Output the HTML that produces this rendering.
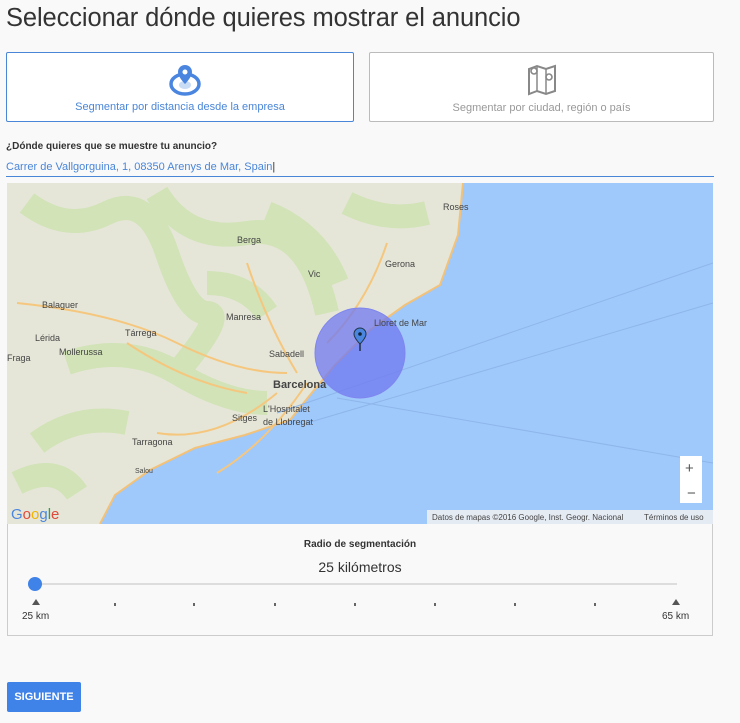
<!DOCTYPE html>
<html><head><meta charset="utf-8"><style>
body{margin:0;background:#f9f9f9;font-family:"Liberation Sans",sans-serif;width:740px;height:723px;position:relative;overflow:hidden}
.a{position:absolute}
h1{position:absolute;left:6px;top:4px;margin:0;font-weight:normal;font-size:25.5px;color:#333;letter-spacing:-0.1px}
.card{position:absolute;top:52px;height:70px;background:#fff;border:1px solid #bbb;border-radius:2px;box-sizing:border-box;text-align:center;font-size:11px}
.lbl{font-size:9px;fill:#444;font-family:"Liberation Sans",sans-serif}
</style></head><body>
<h1>Seleccionar dónde quieres mostrar el anuncio</h1>
<div class="card" style="left:6px;width:348px;border-color:#4a86d8">
<svg class="a" style="left:160px;top:10px" width="36" height="34" viewBox="0 0 36 34"><ellipse cx="18" cy="21" rx="14" ry="10" fill="none" stroke="#4a86e0" stroke-width="3.5"/><ellipse cx="18" cy="22" rx="6" ry="4" fill="#c9dcf5"/><path d="M18 2a7 7 0 0 0-7 7c0 5 7 12 7 12s7-7 7-12a7 7 0 0 0-7-7z" fill="#4a86e0"/><circle cx="18" cy="9" r="2.5" fill="#fff"/></svg>
<div class="a" style="left:0;right:0;top:48px;color:#4a86d8">Segmentar por distancia desde la empresa</div></div>
<div class="card" style="left:369px;width:345px">
<svg class="a" style="left:156px;top:10px" width="32" height="34" viewBox="0 0 32 34"><path d="M3 6l8-3 9 3 9-3v25l-9 3-9-3-8 3z" fill="none" stroke="#888" stroke-width="2"/><path d="M11 3v25M20 6v25" stroke="#888" stroke-width="1.5"/><circle cx="8" cy="8" r="3" fill="none" stroke="#888" stroke-width="1.6"/><circle cx="23" cy="14" r="3" fill="none" stroke="#888" stroke-width="1.6"/></svg>
<div class="a" style="left:0;right:0;top:49px;color:#999">Segmentar por ciudad, región o país</div></div>
<div class="a" style="left:6px;top:141px;font-size:10px;font-weight:bold;color:#333">¿Dónde quieres que se muestre tu anuncio?</div>
<div class="a" style="left:6px;top:161px;font-size:11px;color:#4a86d8">Carrer de Vallgorguina, 1, 08350 Arenys de Mar, Spain<span style="color:#333">|</span></div>
<div class="a" style="left:6px;top:176px;width:708px;height:1px;background:#4a86d8"></div>
<svg class="a" style="left:7px;top:183px" width="706" height="341" viewBox="0 0 706 341">
<rect width="706" height="341" fill="#9fc8fb"/>
<polygon points="0,0 456,0 451,52 433,102 398,122 363,147 328,182 303,212 283,237 238,252 188,265 143,287 108,312 93,341 0,341" fill="#e6e6d8"/>
<path d="M20 20q40 30 80 10t60 40 40 60-30 60M150 10q30 50 90 40t80 80M260 30q50 20 70 70M60 180q60-20 110 10t90 30M30 260q40-30 90-20M340 20q40 20 80 10M10 300q40-20 60 10M200 100q40 0 60 30" stroke="#cde2b2" stroke-width="24" fill="none" opacity="0.85"/>
<path d="M10 120q100 10 160 40t110 30M240 80q20 60 50 110M300 200q-40 60-90 90M120 160q60 40 120 50M380 60q-20 60-60 100M150 250q60 10 120-40" stroke="#f5c77e" stroke-width="2" fill="none"/>
<path d="M456 0L451 52 433 102 398 122 363 147 328 182 303 212 283 237 238 252 188 265 143 287 108 312 93 341" stroke="#f2c27a" stroke-width="2" fill="none"/>
<path d="M270 230L706 80M300 240L706 120M330 215L706 280" stroke="#8fb6ea" stroke-width="1" fill="none"/>
<circle cx="353" cy="170" r="45" fill="#6f78f0" fill-opacity="0.75" stroke="#7f86ee" stroke-width="1"/>
<path d="M353 145a6 6 0 0 0-6 6c0 4 6 10 6 10s6-6 6-10a6 6 0 0 0-6-6z" fill="#4a86e0" stroke="#234" stroke-width="1"/><circle cx="353" cy="151" r="1.8" fill="#123"/><line x1="353" y1="160" x2="353" y2="168" stroke="#234" stroke-width="1.5"/>
<g class="lbl"><text x="436" y="27">Roses</text><text x="230" y="60">Berga</text><text x="301" y="94">Vic</text><text x="378" y="84">Gerona</text><text x="35" y="125">Balaguer</text><text x="219" y="137">Manresa</text><text x="28" y="158">Lérida</text><text x="118" y="153">Tárrega</text><text x="52" y="172">Mollerussa</text><text x="367" y="143">Lloret de Mar</text><text x="262" y="174">Sabadell</text><text x="266" y="205" style="font-size:11px;font-weight:bold">Barcelona</text><text x="0" y="178">Fraga</text><text x="225" y="238">Sitges</text><text x="256" y="229">L'Hospitalet</text><text x="256" y="242">de Llobregat</text><text x="125" y="262">Tarragona</text><text x="128" y="290" style="font-size:7px">Salou</text></g>
<text x="4" y="336" style="font-size:15px;font-family:'Liberation Sans';" fill="#4a86e0">G<tspan fill="#e04a3a">o</tspan><tspan fill="#f0b400">o</tspan><tspan fill="#4a86e0">g</tspan><tspan fill="#30a050">l</tspan><tspan fill="#e04a3a">e</tspan></text>
<rect x="673" y="273" width="22" height="47" fill="#fff"/><text x="678" y="290" style="font-size:15px" fill="#555">+</text><text x="680" y="315" style="font-size:15px" fill="#555">−</text>
<rect x="420" y="327" width="286" height="14" fill="#f1f1f1" opacity="0.85"/>
<text x="425" y="337" style="font-size:8px" fill="#444">Datos de mapas ©2016 Google, Inst. Geogr. Nacional</text><text x="637" y="337" style="font-size:8px" fill="#444">Términos de uso</text>
</svg>
<div class="a" style="left:7px;top:524px;width:706px;height:112px;border:1px solid #ccc;border-top:none;box-sizing:border-box;background:#f9f9f9"></div>
<div class="a" style="left:0;width:720px;top:539px;text-align:center;font-size:10px;font-weight:bold;color:#333">Radio de segmentación</div>
<div class="a" style="left:0;width:720px;top:559px;text-align:center;font-size:14px;color:#333">25 kilómetros</div>
<div class="a" style="left:35px;top:583px;width:642px;height:2px;background:#ddd"></div>
<div class="a" style="left:28px;top:577px;width:14px;height:14px;border-radius:50%;background:#3f82e8"></div>
<div class="a" style="left:32px;top:599px;width:0;height:0;border-left:4px solid transparent;border-right:4px solid transparent;border-bottom:6px solid #555"></div>
<div class="a" style="left:672px;top:599px;width:0;height:0;border-left:4px solid transparent;border-right:4px solid transparent;border-bottom:6px solid #555"></div>
<div class="a" style="left:114px;top:603px;width:2px;height:3px;background:#666"></div>
<div class="a" style="left:193px;top:603px;width:2px;height:3px;background:#666"></div>
<div class="a" style="left:274px;top:603px;width:2px;height:3px;background:#666"></div>
<div class="a" style="left:354px;top:603px;width:2px;height:3px;background:#666"></div>
<div class="a" style="left:434px;top:603px;width:2px;height:3px;background:#666"></div>
<div class="a" style="left:514px;top:603px;width:2px;height:3px;background:#666"></div>
<div class="a" style="left:594px;top:603px;width:2px;height:3px;background:#666"></div>
<div class="a" style="left:22px;top:611px;font-size:10px;color:#333">25 km</div>
<div class="a" style="left:662px;top:611px;font-size:10px;color:#333">65 km</div>
<div class="a" style="left:7px;top:682px;width:74px;height:30px;background:#3f82e8;border-radius:2px;color:#fff;font-size:11px;font-weight:bold;line-height:30px;text-align:center">SIGUIENTE</div>
</body></html>
